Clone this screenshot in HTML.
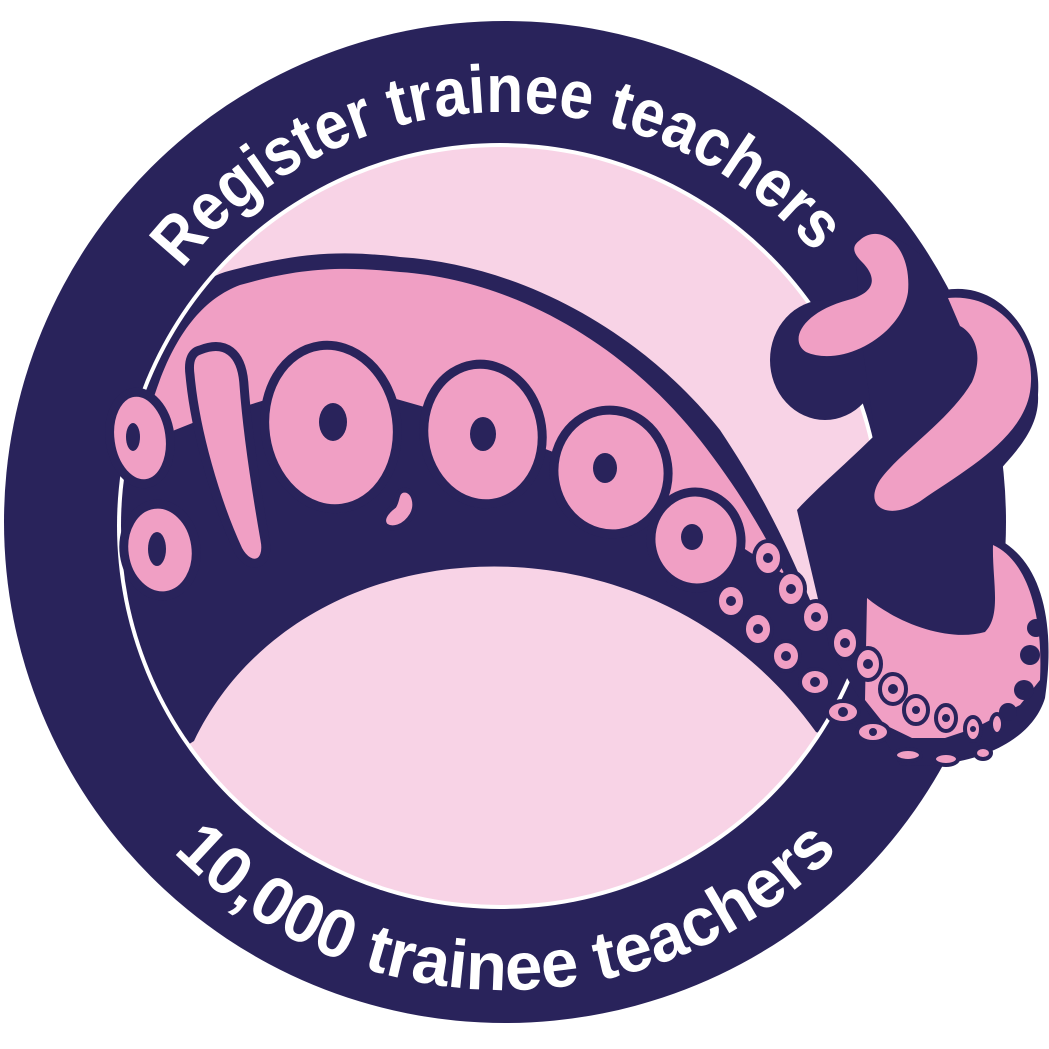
<!DOCTYPE html>
<html><head><meta charset="utf-8"><style>
html,body{margin:0;padding:0;background:#fff;}
svg{display:block;}
text{font-family:"Liberation Sans",sans-serif;font-weight:bold;fill:#fff;}
</style></head><body>
<svg width="1049" height="1049" viewBox="0 0 1049 1049" xmlns="http://www.w3.org/2000/svg">
<defs>
<clipPath id="inner"><circle cx="500" cy="526" r="379"/></clipPath>
<path id="topArc" d="M95,522 A410,410 0 0 1 915,522"/>
<path id="botArc" d="M37,522 A468,468 0 0 0 973,522"/>
</defs>
<circle cx="505" cy="522" r="501" fill="#29235b"/>
<circle cx="500" cy="526" r="383" fill="#fff"/>
<circle cx="500" cy="526" r="379" fill="#f8d3e6"/>

<g clip-path="url(#inner)">
  <!-- navy band -->
  <path fill="#29235b" d="M125,400 C150,330 185,285 225,272 C300,252 340,250 400,257 C520,265 640,330 720,430 C760,490 785,540 810,600 L900,760 L816,732 C650,500 300,520 194,741 L100,800 Z"/>
  <!-- pink upper band -->
  <path fill="#f09fc4" d="M150,410 C170,340 200,300 240,285 C300,268 340,266 400,272 C515,280 625,345 700,440 C735,485 760,525 785,575 L700,520 L600,470 L470,420 L330,380 L200,420 L150,440 Z"/>
</g>

<!-- stalk & right tentacle outline -->
<ellipse cx="825" cy="360" rx="55" ry="60" fill="#29235b"/>
<path fill="#29235b" d="M875,435 C850,460 815,490 797,510 L830,650 L900,765 C960,770 1030,748 1045,698 C1055,630 1045,565 1000,540 L1000,470 C1012,455 1040,430 1038,395 C1042,335 1000,280 945,290 C925,245 885,225 855,240 L860,330 Z"/>

<!-- pink curl 1 -->
<path fill="#f09fc4" d="M860,240 C880,222 912,245 908,292 C902,335 842,368 806,352 C788,340 803,312 848,300 C878,292 876,276 862,262 C852,252 852,246 860,240 Z"/>
<!-- pink arm 2 -->
<path fill="#f09fc4" d="M948,298 C1000,293 1038,340 1030,392 C1022,440 962,472 922,500 C890,522 862,508 880,480 C900,452 950,420 972,382 C985,352 972,332 960,326 Z"/>
<!-- bottom pink tentacle end -->
<path fill="#f09fc4" d="M867,598 C900,625 950,642 985,632 C1002,615 992,580 993,545 C1030,562 1043,620 1040,680 L1020,705 L1000,715 L975,728 L945,738 L912,738 L885,725 L865,700 Z"/>
<g fill="#29235b">
  <circle cx="1036" cy="628" r="9"/><circle cx="1030" cy="655" r="10"/><circle cx="1024" cy="690" r="10"/><circle cx="1008" cy="712" r="9"/>
</g>

<!-- big suckers -->
<g stroke="#29235b" stroke-width="9" fill="#f09fc4">
  <ellipse cx="140" cy="438" rx="30" ry="46" transform="rotate(-8 140 438)"/>
  <ellipse cx="160" cy="550" rx="36" ry="46" transform="rotate(-8 160 550)"/>
  <path d="M200,350 C225,340 242,352 244,385 C248,440 258,500 265,540 C270,565 250,572 238,550 C215,500 195,430 190,375 C188,360 192,352 200,350 Z"/>
  <ellipse cx="331" cy="427" rx="66" ry="82" transform="rotate(-8 331 427)"/>
  <ellipse cx="483" cy="434" rx="59" ry="70" transform="rotate(-8 483 434)"/>
  <ellipse cx="611" cy="472" rx="57" ry="62" transform="rotate(-8 611 472)"/>
  <ellipse cx="696" cy="540" rx="45" ry="48" transform="rotate(-8 696 540)"/>
  <path d="M404,490 C414,490 418,505 412,515 C404,528 392,530 386,526 C380,520 386,512 394,506 C398,500 396,491 404,490 Z" stroke-width="5"/>
</g>
<g fill="#29235b">
  <ellipse cx="157" cy="549" rx="9" ry="17"/>
  <ellipse cx="133" cy="437" rx="7" ry="14"/>
  <ellipse cx="333" cy="422" rx="14" ry="19"/>
  <ellipse cx="483" cy="434" rx="13" ry="17"/>
  <ellipse cx="605" cy="468" rx="12" ry="15"/>
  <ellipse cx="692" cy="537" rx="11" ry="13"/>
</g>

<!-- small suckers -->
<g fill="#f09fc4" stroke="#29235b" stroke-width="4">
  <ellipse cx="768" cy="558" rx="14" ry="17"/>
  <ellipse cx="791" cy="589" rx="14" ry="17"/>
  <ellipse cx="731" cy="601" rx="14" ry="16"/>
  <ellipse cx="816" cy="617" rx="14" ry="16"/>
  <ellipse cx="758" cy="629" rx="14" ry="16"/>
  <ellipse cx="845" cy="643" rx="13" ry="16"/>
  <ellipse cx="786" cy="656" rx="14" ry="15"/>
  <ellipse cx="868" cy="664" rx="13" ry="16"/>
  <ellipse cx="815" cy="682" rx="15" ry="13"/>
  <ellipse cx="893" cy="689" rx="13" ry="15"/>
  <ellipse cx="843" cy="712" rx="16" ry="11"/>
  <ellipse cx="916" cy="710" rx="12" ry="14"/>
  <ellipse cx="873" cy="732" rx="16" ry="10"/>
  <ellipse cx="946" cy="718" rx="10" ry="13"/>
  <ellipse cx="973" cy="729" rx="8" ry="12"/>
  <ellipse cx="997" cy="724" rx="6" ry="10"/>
  <ellipse cx="908" cy="755" rx="13" ry="6"/>
  <ellipse cx="946" cy="759" rx="12" ry="6"/>
  <ellipse cx="983" cy="753" rx="8" ry="6"/>
</g>
<g fill="#29235b">
  <circle cx="768" cy="558" r="5"/><circle cx="791" cy="589" r="5"/><circle cx="731" cy="601" r="5"/>
  <circle cx="816" cy="617" r="5"/><circle cx="758" cy="629" r="5"/><circle cx="845" cy="643" r="5"/>
  <circle cx="786" cy="656" r="5"/><circle cx="868" cy="664" r="5"/><circle cx="815" cy="682" r="5"/>
  <circle cx="893" cy="689" r="5"/><circle cx="843" cy="712" r="5"/><circle cx="916" cy="710" r="4"/>
  <circle cx="873" cy="732" r="4"/><circle cx="946" cy="718" r="4"/><circle cx="973" cy="729" r="3"/>
</g>

<text font-size="68"><textPath href="#topArc" startOffset="272" textLength="723" lengthAdjust="spacingAndGlyphs">Register trainee teachers</textPath></text>
<text font-size="68"><textPath href="#botArc" startOffset="366" textLength="740" lengthAdjust="spacingAndGlyphs">10,000 trainee teachers</textPath></text>
</svg>
</body></html>
